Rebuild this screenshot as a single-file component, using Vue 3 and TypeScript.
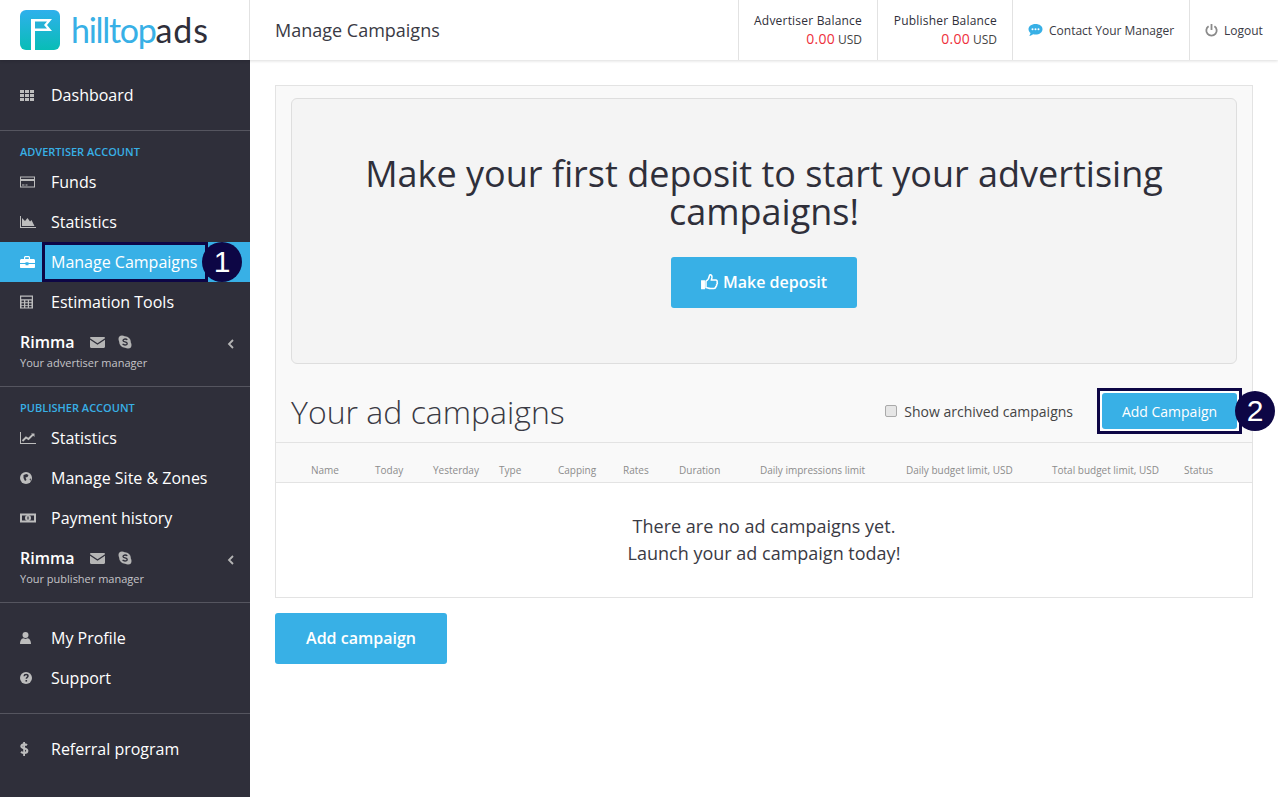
<template>
  <div class="app">
    <header class="topbar">
      <div class="logo">
        <svg class="logo__mark" width="40" height="40" viewBox="0 0 40 40">
          <defs>
            <linearGradient id="logo-grad" x1="0" y1="0" x2="0" y2="1">
              <stop offset="0" stop-color="#2fb0ec" />
              <stop offset="1" stop-color="#08bdb6" />
            </linearGradient>
          </defs>
          <rect width="40" height="40" rx="6" fill="url(#logo-grad)" />
          <path d="M11 40V9h21l-5 6 5 6H15v19z" fill="#fff" />
          <path d="M15 11.500h12l-3 3.500 3 3.500H15z" fill="#26b2d6" />
        </svg>
        <span class="logo__text"><span class="logo__hill">hilltop</span>ads</span>
      </div>
      <h1 class="topbar__title">Manage Campaigns</h1>
      <div class="topbar__right">
        <div v-for="b in balances" :key="b.label" class="balance" :style="{ width: b.width + 'px' }">
          <div class="balance__label">{{ b.label }}</div>
          <div class="balance__value"><b>0.00</b> USD</div>
        </div>
        <a class="toplink toplink--contact">
          <svg width="15" height="14" viewBox="0 0 15 14">
            <path d="M7.500 1C3.400 1 .5 3.300.5 6.200c0 1.500.8 2.800 2 3.700-.1 1.200-.8 2.200-1.300 2.800 1.700 0 3-.7 3.900-1.500.8.200 1.600.3 2.400.3 4.100 0 7-2.300 7-5.300S11.600 1 7.500 1z" fill="#38b0e6" />
            <circle cx="4.500" cy="6.200" r="1" fill="#fff" />
            <circle cx="7.500" cy="6.200" r="1" fill="#fff" />
            <circle cx="10.500" cy="6.200" r="1" fill="#fff" />
          </svg>
          Contact Your Manager
        </a>
        <a class="toplink toplink--logout">
          <svg width="13" height="14" viewBox="0 0 13 14" fill="none" stroke="#8a8a8a" stroke-width="1.800">
            <path d="M3.600 3.200a5.200 5.200 0 1 0 5.800 0" />
            <path d="M6.500 1v6" />
          </svg>
          Logout
        </a>
      </div>
    </header>

    <div class="body">
      <aside class="sidebar">
        <section v-for="(sec, i) in sections" :key="i" class="side-sec" :class="{ 'side-sec--label': sec.label }">
          <div v-if="sec.label" class="side-sec__label">{{ sec.label }}</div>
          <a
            v-for="item in sec.items"
            :key="item.text"
            class="side-item"
            :class="{ 'side-item--active': item.active }"
          >
            <svg class="side-item__icon" width="16" height="16" viewBox="0 0 16 16" v-html="icons[item.icon]"></svg>
            <span>{{ item.text }}</span>
            <template v-if="item.active">
              <span class="mark mark--side"></span>
              <span class="badge badge--side">1</span>
            </template>
          </a>
          <div v-if="sec.manager" class="manager">
            <div class="manager__top">
              <strong>Rimma</strong>
              <svg width="15" height="11" viewBox="0 0 15 11">
                <path d="M0 1.200C0 .5.500 0 1.200 0h12.600c.7 0 1.200.5 1.200 1.200L7.500 6.200z" fill="#b5b5b5" />
                <path d="M0 2.800V9.800c0 .7.500 1.200 1.200 1.200h12.600c.7 0 1.200-.5 1.200-1.200V2.800L7.500 7.800z" fill="#b5b5b5" />
              </svg>
              <svg width="14" height="14" viewBox="0 0 14 14">
                <circle cx="4" cy="4" r="3.500" fill="#b5b5b5" />
                <circle cx="10" cy="10" r="3.500" fill="#b5b5b5" />
                <circle cx="7" cy="7" r="5.800" fill="#b5b5b5" />
                <path d="M9.300 4.900C8.800 4.300 8 4 7.100 4 5.900 4 5 4.600 5 5.500c0 1.900 4.200 1 4.200 3 0 .9-1 1.500-2.200 1.500-1 0-1.900-.4-2.400-1.100" fill="none" stroke="#2f2f3a" stroke-width="1.300" />
              </svg>
              <svg class="manager__caret" width="7" height="10" viewBox="0 0 7 10" fill="none" stroke="#b5b5b5" stroke-width="1.800">
                <path d="M6 1L2 5l4 4" />
              </svg>
            </div>
            <div class="manager__sub">{{ sec.manager }}</div>
          </div>
        </section>
      </aside>

      <main class="main">
        <div class="panel">
          <div class="well">
            <h2>Make your first deposit to start your advertising campaigns!</h2>
            <button type="button" class="btn btn--deposit">
              <svg width="18" height="16" viewBox="0 0 18 16" fill="none" stroke="#fff" stroke-width="1.500">
                <path d="M.8 7h2.400v7.500H.8z" fill="#fff" />
                <path d="M5 7.200c1.500-.8 3-2.600 3.300-5 .1-.9.300-1.500 1-1.500 1.300 0 1.800 1.500 1.600 3L10.400 6h4.300c1.500 0 1.800 1.300 1.300 2.200.5.800.3 1.800-.4 2.300.2.900-.1 1.700-.8 2.100 0 1.200-.8 1.900-2 1.900H9.500c-1.800 0-3-.8-4.500-.9z" />
              </svg>
              Make deposit
            </button>
          </div>

          <div class="list-head">
            <h3>Your ad campaigns</h3>
            <label class="archived">
              <input v-model="showArchived" type="checkbox" />
              Show archived campaigns
            </label>
            <div class="add-wrap">
              <button type="button" class="btn btn--add">Add Campaign</button>
              <span class="badge badge--add">2</span>
            </div>
          </div>

          <div class="thead">
            <span v-for="c in columns" :key="c">{{ c }}</span>
          </div>
          <div class="empty">
            There are no ad campaigns yet.<br />
            Launch your ad campaign today!
          </div>
        </div>
        <button type="button" class="btn btn--bottom">Add campaign</button>
      </main>
    </div>
  </div>
</template>

<script setup lang="ts">
import { ref } from 'vue'

interface SideItem {
  text: string
  icon: string
  active?: boolean
}
interface SideSection {
  label?: string
  manager?: string
  items: SideItem[]
}

const showArchived = ref(false)

const balances = [
  { label: 'Advertiser Balance', width: 139 },
  { label: 'Publisher Balance', width: 135 },
]

const columns = [
  'Name',
  'Today',
  'Yesterday',
  'Type',
  'Capping',
  'Rates',
  'Duration',
  'Daily impressions limit',
  'Daily budget limit, USD',
  'Total budget limit, USD',
  'Status',
]

const sections: SideSection[] = [
  { items: [{ text: 'Dashboard', icon: 'grid' }] },
  {
    label: 'ADVERTISER ACCOUNT',
    manager: 'Your advertiser manager',
    items: [
      { text: 'Funds', icon: 'card' },
      { text: 'Statistics', icon: 'area' },
      { text: 'Manage Campaigns', icon: 'case', active: true },
      { text: 'Estimation Tools', icon: 'calc' },
    ],
  },
  {
    label: 'PUBLISHER ACCOUNT',
    manager: 'Your publisher manager',
    items: [
      { text: 'Statistics', icon: 'line' },
      { text: 'Manage Site & Zones', icon: 'globe' },
      { text: 'Payment history', icon: 'money' },
    ],
  },
  {
    items: [
      { text: 'My Profile', icon: 'user' },
      { text: 'Support', icon: 'help' },
    ],
  },
  { items: [{ text: 'Referral program', icon: 'dollar' }] },
]

const icons: Record<string, string> = {
  grid: '<path d="M0 3h4v3H0zM5 3h4v3H5zM10 3h4v3h-4zM0 7h4v3H0zM5 7h4v3H5zM10 7h4v3h-4zM0 11h4v3H0zM5 11h4v3H5zM10 11h4v3h-4z" fill="currentColor"/>',
  card: '<path fill-rule="evenodd" d="M0 2.500h15v11H0zM1 3.500v1.500h13V3.500zM1 7v5.500h13V7zM2 10.500h2.500v1H2zM5.500 10.500H7.500v1h-2z" fill="currentColor"/>',
  area: '<path d="M0 2h1v11h15v1H0z" fill="currentColor"/><path d="M2 12V4l3 3 2.500-3 2.500 3.500 1.500-1.500 3 6z" fill="currentColor"/>',
  case: '<path fill-rule="evenodd" d="M4 3.500C4 2.700 4.700 2 5.500 2h3c.8 0 1.500.7 1.500 1.500V5h3.500c.8 0 1.500.7 1.500 1.500V9H8.500v-.8h-3V9H0V6.500C0 5.700.7 5 1.500 5H4zM5.200 5h3.600V3.500c0-.2-.1-.3-.3-.3h-3c-.2 0-.3.100-.3.300z" fill="currentColor"/><path d="M0 10h5.500v1.200h3V10H15v3c0 .6-.5 1-1 1H1c-.6 0-1-.4-1-1z" fill="currentColor"/>',
  calc: '<path fill-rule="evenodd" d="M0 1.500h13v13H0zM1.200 2.700v2.500h10.600V2.700zM1.500 6.500v1.800h2.500V6.500zM5.300 6.500v1.800h2.500V6.500zM9 6.500v1.800h2.500V6.500zM1.500 9.200V11h2.500V9.200zM5.300 9.200V11h2.500V9.200zM9 9.200V11h2.500V9.200zM1.500 11.800v1.700h2.500v-1.700zM5.300 11.800v1.700h2.500v-1.700zM9 11.800v1.700h2.500v-1.700z" fill="currentColor"/>',
  line: '<path d="M0 2h1v11h15v1H0z" fill="currentColor"/><path d="M2.500 11L6 7.500l2.500 1.500L13 4.500" fill="none" stroke="currentColor" stroke-width="1.800"/><path d="M11 3.500h3.500V7z" fill="currentColor"/>',
  globe: '<circle cx="6" cy="8" r="6" fill="currentColor"/><path d="M3.500 5l3-1 2 1-1 2-2 .5 1 2.500-1.500 1-1.500-3zM9.500 9l1.500-.5L10.500 11z" fill="#2f2f3a"/>',
  money: '<path fill-rule="evenodd" d="M0 3.500h16v9H0zM2 5.500v5h12v-5z" fill="currentColor"/><circle cx="8" cy="8" r="3" fill="currentColor"/><path d="M7.400 6.500h1.200v3H7.400z" fill="#2f2f3a"/>',
  user: '<circle cx="5.500" cy="5" r="3" fill="currentColor"/><path d="M0 14c0-3 1-5.500 3.500-5.800L5.500 9l2-.8C10 8.500 11 11 11 14z" fill="currentColor"/>',
  help: '<circle cx="6" cy="8" r="6" fill="currentColor"/><path d="M4.100 6.300c.1-1.200 1-1.800 2-1.800s1.900.7 1.900 1.600c0 1.300-1.700 1.300-1.700 2.700" fill="none" stroke="#2f2f3a" stroke-width="1.500"/><path d="M5.500 10h1.600v1.600H5.500z" fill="#2f2f3a"/>',
  dollar: '<path d="M7 4.200c-.8-.6-1.800-.9-2.900-.9-1.600 0-2.700.8-2.700 1.900 0 2.700 5.900 1.500 5.900 4.600 0 1.300-1.300 2.200-3.100 2.200-1.100 0-2.200-.4-3.200-1.100" fill="none" stroke="currentColor" stroke-width="2.200"/><path d="M3.200 1h1.800v14H3.200z" fill="currentColor"/>',
}
</script>

<style>
body {
  background: #fff;
}
</style>

<style scoped>
.app {
  display: flex;
  flex-direction: column;
  min-height: 797px;
  font-family: 'Open Sans', 'Liberation Sans', sans-serif;
  color: #2f2f3a;
}
.topbar {
  display: flex;
  align-items: stretch;
  height: 60px;
  background: #fff;
  box-shadow: 0 1px 3px rgba(0, 0, 0, 0.14);
  position: relative;
}
.logo {
  width: 250px;
  box-sizing: border-box;
  padding-left: 20px;
  display: flex;
  align-items: center;
  gap: 11px;
  border-right: 1px solid #e2e2e2;
}
.logo__text {
  font-family: Lato, sans-serif;
  font-size: 34px;
  line-height: 40px;
  letter-spacing: 0.9px;
  color: #2f2f3a;
}
.logo__hill {
  color: #38b0e6;
  letter-spacing: -1.300px;
}
.topbar__title {
  margin: 0 0 0 25px;
  align-self: center;
  font-size: 18px;
  font-weight: 400;
  color: #3a3a44;
}
.topbar__right {
  margin-left: auto;
  display: flex;
}
.balance {
  box-sizing: border-box;
  border-left: 1px solid #e2e2e2;
  padding: 12px 15px 0 0;
  text-align: right;
  font-size: 12px;
  line-height: 18px;
}
.balance__label {
  font-weight: 500;
  letter-spacing: 0.2px;
  color: #2f2f3a;
}
.balance__value {
  color: #444;
}
.balance__value b {
  font-size: 14px;
  font-weight: 400;
  letter-spacing: 0.2px;
  color: #ee2f3b;
}
.toplink {
  display: flex;
  align-items: center;
  gap: 6px;
  border-left: 1px solid #e2e2e2;
  font-size: 12px;
  color: #3a3a44;
}
.toplink--contact {
  width: 177px;
  padding-left: 15px;
  box-sizing: border-box;
}
.toplink--logout {
  width: 89px;
  padding-left: 15px;
  box-sizing: border-box;
}
.body {
  flex: 1;
  display: flex;
}
.sidebar {
  width: 250px;
  flex: none;
  background: #2f2f3a;
  color: #fff;
}
.side-sec {
  padding: 15px 0;
  border-bottom: 1px solid #55555f;
}
.side-sec:last-child {
  border-bottom: 0;
}
.side-sec--label {
  padding: 0;
}
.side-sec__label {
  padding-left: 20px;
  height: 31px;
  line-height: 42px;
  font-size: 11px;
  font-weight: 600;
  color: #38b0e6;
}
.side-item {
  position: relative;
  display: flex;
  align-items: center;
  height: 40px;
  padding-left: 20px;
  font-size: 16px;
}
.side-item__icon {
  width: 16px;
  margin-right: 15px;
  flex: none;
  color: #bdbdbd;
}
.side-item--active {
  background: #38b0e6;
}
.side-item--active .side-item__icon {
  color: #fff;
}
.mark {
  position: absolute;
  box-sizing: border-box;
  border: 3px solid #0d0645;
}
.mark--side {
  left: 42px;
  top: 0;
  width: 166px;
  height: 40px;
}
.badge {
  position: absolute;
  width: 40px;
  height: 40px;
  border-radius: 50%;
  background: #0d0645;
  color: #fff;
  font-family: 'Liberation Sans', sans-serif;
  font-size: 30px;
  line-height: 40px;
  text-align: center;
}
.badge--side {
  left: 202px;
  top: 0;
}
.manager {
  height: 64px;
  padding: 9px 20px 0;
  box-sizing: border-box;
}
.manager__top {
  display: flex;
  align-items: center;
  gap: 13px;
  height: 22px;
}
.manager__top strong {
  font-size: 16px;
  font-weight: 600;
  margin-right: 2px;
}
.manager__caret {
  margin-left: auto;
  margin-right: -4px;
  margin-top: 4px;
}
.manager__sub {
  font-size: 11px;
  line-height: 20px;
  color: #c4c4c8;
}
.main {
  flex: 1;
  padding: 25px 25px 0;
  min-width: 0;
}
.panel {
  border: 1px solid #e3e3e3;
  background: #f9f9f9;
}
.well {
  margin: 12px 15px 0;
  height: 266px;
  box-sizing: border-box;
  padding-top: 56px;
  background: #f4f4f4;
  border: 1px solid #dedede;
  border-radius: 6px;
  text-align: center;
}
.well h2 {
  margin: 0 auto 26px;
  width: 840px;
  font-size: 36px;
  line-height: 38px;
  font-weight: 400;
  color: #2f2f3a;
}
.btn {
  border: 0;
  border-radius: 3px;
  background: #38b0e6;
  color: #fff;
  font-family: inherit;
  cursor: pointer;
}
.btn--deposit {
  width: 186px;
  height: 51px;
  padding-bottom: 3px;
  font-size: 16px;
  font-weight: 600;
}
.btn--deposit svg {
  vertical-align: -2px;
}
.list-head {
  display: flex;
  align-items: center;
  height: 79px;
  box-sizing: border-box;
  padding: 16px 15px 0;
  border-bottom: 1px solid #e3e3e3;
}
.list-head h3 {
  margin: 0;
  font-size: 32px;
  font-weight: 300;
  color: #3a3a44;
}
.archived {
  margin-left: auto;
  display: flex;
  align-items: center;
  gap: 7px;
  font-size: 14px;
  color: #444;
}
.archived input {
  appearance: none;
  margin: 0;
  width: 12px;
  height: 12px;
  border: 1px solid #aaa;
  border-radius: 2px;
  background: #e6e6e6;
}
.add-wrap {
  position: relative;
  margin-left: 24px;
  box-sizing: border-box;
  border: 3px solid #0d0645;
  padding: 2px;
  background: #fff;
  margin-right: -5px;
  display: flex;
}
.btn--add {
  width: 135px;
  height: 36px;
  font-size: 14px;
}
.badge--add {
  left: 135px;
  top: 0;
}
.thead {
  display: grid;
  grid-template-columns: 64px 58px 66px 59px 65px 56px 81px 146px 146px 132px auto;
  padding: 15px 0 0 35px;
  height: 40px;
  box-sizing: border-box;
  align-items: center;
  font-size: 10px;
  color: #8c8c8c;
  border-bottom: 1px solid #e3e3e3;
}
.empty {
  background: #fff;
  height: 114px;
  box-sizing: border-box;
  padding-top: 30px;
  text-align: center;
  font-size: 18px;
  line-height: 27px;
  color: #3a3a44;
}
.btn--bottom {
  display: block;
  margin-top: 15px;
  width: 172px;
  height: 51px;
  padding-bottom: 3px;
  font-size: 16px;
  font-weight: 600;
}
</style>
